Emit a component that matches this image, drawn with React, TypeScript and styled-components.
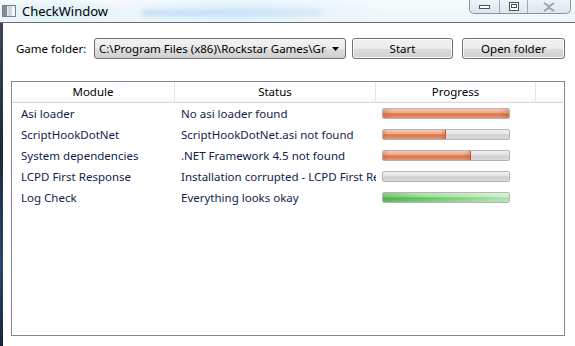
import React from 'react';
import styled, { createGlobalStyle } from 'styled-components';

const Global = createGlobalStyle`
	html, body {
		margin: 0;
		padding: 0;
		background: #ffffff;
	}
	body {
		font-family: 'Noto Sans', 'DejaVu Sans', sans-serif;
		font-size: 11.5px;
		color: #000;
	}
`;

type Check = { module: string; status: string; progress: number; ok?: boolean };

const checks: Check[] = [
	{ module: 'Asi loader', status: 'No asi loader found', progress: 100 },
	{ module: 'ScriptHookDotNet', status: 'ScriptHookDotNet.asi not found', progress: 50 },
	{ module: 'System dependencies', status: '.NET Framework 4.5 not found', progress: 70 },
	{ module: 'LCPD First Response', status: 'Installation corrupted - LCPD First Response', progress: 0 },
	{ module: 'Log Check', status: 'Everything looks okay', progress: 100, ok: true },
];

const App = () => {
	return (
		<>
			<Global />
			<Window>
				<TitleBar>
					<AppIcon width='14' height='12' viewBox='0 0 14 12'>
						<rect x='0.5' y='0.5' width='13' height='11' fill='#e8eaec' stroke='#7a8088' />
						<rect x='1' y='1' width='4' height='10' fill='#7f8c9a' />
						<rect x='6' y='1' width='7' height='10' fill='#cfd6dc' />
						<rect x='10' y='1' width='3' height='10' fill='#f4f6f8' />
					</AppIcon>
					<Title>CheckWindow</Title>
					<BlurredUrl />
					<CaptionButtons>
						<CaptionButton $width={29}>
							<svg width='11' height='6' viewBox='0 0 11 6'>
								<rect x='0.5' y='1.5' width='10' height='3' fill='#fff' stroke='#4a4f58' />
							</svg>
						</CaptionButton>
						<CaptionButton $width={27}>
							<svg width='10' height='9' viewBox='0 0 10 9'>
								<rect x='0.5' y='0.5' width='9' height='8' fill='#fff' stroke='#4a4f58' />
								<rect x='2.5' y='2.5' width='5' height='3' fill='none' stroke='#4a4f58' />
							</svg>
						</CaptionButton>
						<CaptionButton $width={42} $last>
							<svg width='12' height='10' viewBox='0 0 12 10'>
								<path d='M1 0.8 L6 4.5 L11 0.8 M1 9.2 L6 5.5 L11 9.2' fill='none' stroke='#6b717a' strokeWidth='1.6' />
								<path d='M1 0.8 L6 4.5 L11 0.8 M1 9.2 L6 5.5 L11 9.2' fill='none' stroke='#fff' strokeWidth='0.6' />
							</svg>
						</CaptionButton>
					</CaptionButtons>
				</TitleBar>
				<Body>
					<Frame />
					<Client>
						<Toolbar>
							<Label>Game folder:</Label>
							<ComboBox>
								<ComboText>C:\Program Files (x86)\Rockstar Games\Grand Theft Auto IV</ComboText>
								<ComboArrow>
									<svg width='7' height='4' viewBox='0 0 7 4'>
										<path d='M0 0 L7 0 L3.5 4 Z' fill='#000' />
									</svg>
								</ComboArrow>
							</ComboBox>
							<Button $width={101}>Start</Button>
							<Button $width={103} $gap={9}>
								Open folder
							</Button>
						</Toolbar>
						<ListView>
							<HeaderRow>
								<HeaderCell>Module</HeaderCell>
								<HeaderCell>Status</HeaderCell>
								<HeaderCell>Progress</HeaderCell>
								<HeaderCell />
							</HeaderRow>
							{checks.map((c) => (
								<Row key={c.module}>
									<ModuleCell>{c.module}</ModuleCell>
									<StatusCell>{c.status}</StatusCell>
									<ProgressCell>
										<Track>
											<Fill
												$ok={c.ok}
												$edge={c.progress > 0 && c.progress < 100}
												style={{ width: `${c.progress}%` }}
											/>
										</Track>
									</ProgressCell>
								</Row>
							))}
						</ListView>
					</Client>
				</Body>
			</Window>
		</>
	);
};

const Window = styled.div`
	width: 575px;
	height: 346px;
	display: flex;
	flex-direction: column;
	overflow: hidden;
`;

const TitleBar = styled.div`
	height: 22px;
	display: flex;
	align-items: flex-start;
	border-bottom: 1px solid #6c6f74;
	background:
		radial-gradient(ellipse 70px 14px at 60px 12px, rgba(190, 225, 245, 0.5), transparent),
		radial-gradient(ellipse 140px 16px at 240px 10px, rgba(205, 235, 250, 0.6), transparent),
		linear-gradient(to bottom, #f6fafd, #edf5fa);
`;

const AppIcon = styled.svg`
	margin: 5px 0 0 2px;
	flex: none;
`;

const Title = styled.div`
	margin: 3px 0 0 6px;
	font-size: 13px;
	color: #000;
	line-height: 16px;
`;

const BlurredUrl = styled.div`
	margin: 10px 0 0 34px;
	width: 180px;
	height: 6px;
	border-radius: 4px;
	background: linear-gradient(to right, rgba(140, 185, 240, 0.4), rgba(170, 205, 245, 0.3));
	filter: blur(2.5px);
`;

const CaptionButtons = styled.div`
	margin-left: auto;
	margin-right: 4px;
	display: flex;
	height: 13px;
	border: 1px solid #8c939c;
	border-top: none;
	border-radius: 0 0 5px 5px;
	background: linear-gradient(to bottom, #eef3f7, #dde5ec);
	overflow: hidden;
`;

const CaptionButton = styled.div<{ $width: number; $last?: boolean }>`
	width: ${(p) => p.$width}px;
	display: flex;
	align-items: center;
	justify-content: center;
	border-right: ${(p) => (p.$last ? 'none' : '1px solid #a3aab3')};
	svg {
		display: block;
	}
`;

const Body = styled.div`
	flex: 1;
	display: flex;
	min-height: 0;
`;

const Frame = styled.div`
	width: 3px;
	flex: none;
	background: linear-gradient(to bottom, #3b4656, #1c2a3c 40%, #27486a 75%, #16263a);
`;

const Client = styled.div`
	flex: 1;
	background: #ffffff;
	display: flex;
	flex-direction: column;
	padding: 15px 10px 10px 13px;
`;

const Toolbar = styled.div`
	display: flex;
	align-items: center;
	height: 21px;
`;

const Label = styled.div`
	width: 78px;
	flex: none;
	line-height: 16px;
	margin-top: 1px;
`;

const ComboBox = styled.div`
	width: 252px;
	height: 21px;
	box-sizing: border-box;
	flex: none;
	display: flex;
	align-items: center;
	border: 1px solid #707070;
	border-radius: 3px;
	background: linear-gradient(to bottom, #f2f2f2 0%, #ebebeb 50%, #dddddd 51%, #cfcfcf 100%);
	overflow: hidden;
`;

const ComboText = styled.div`
	flex: 1;
	min-width: 0;
	overflow: hidden;
	white-space: nowrap;
	padding-left: 4px;
	line-height: 16px;
`;

const ComboArrow = styled.div`
	width: 18px;
	flex: none;
	display: flex;
	justify-content: center;
	padding-right: 1px;
	svg {
		display: block;
	}
`;

const Button = styled.div<{ $width: number; $gap?: number }>`
	width: ${(p) => p.$width}px;
	height: 21px;
	box-sizing: border-box;
	flex: none;
	margin-left: ${(p) => p.$gap ?? 6}px;
	display: flex;
	align-items: center;
	justify-content: center;
	border: 1px solid #707070;
	border-radius: 3px;
	box-shadow: inset 0 0 0 1px rgba(255, 255, 255, 0.8);
	background: linear-gradient(to bottom, #f2f2f2 0%, #ebebeb 50%, #dddddd 51%, #cfcfcf 100%);
	line-height: 16px;
`;

const ListView = styled.div`
	margin: 22px 0 0 -5px;
	flex: 1;
	border: 1px solid #828790;
	display: flex;
	flex-direction: column;
	background: #fff;
`;

const columns = '163px 201px 160px 1fr';

const HeaderRow = styled.div`
	display: grid;
	grid-template-columns: ${columns};
	height: 20px;
	border-bottom: 1px solid #d5d5d5;
	background: linear-gradient(to bottom, #ffffff, #ffffff 60%, #f7f8f9);
	margin-right: 1px;
`;

const HeaderCell = styled.div`
	display: flex;
	align-items: center;
	justify-content: center;
	border-right: 1px solid #e3e4e6;
	line-height: 16px;
	&:last-child {
		border-right: none;
	}
`;

const Row = styled.div`
	display: grid;
	grid-template-columns: ${columns};
	height: 21px;
	align-items: center;
	color: #101c4a;
	line-height: 16px;
`;

const ModuleCell = styled.div`
	padding-left: 9px;
	white-space: nowrap;
	overflow: hidden;
`;

const StatusCell = styled.div`
	padding-left: 6px;
	white-space: nowrap;
	overflow: hidden;
`;

const ProgressCell = styled.div`
	padding-left: 6px;
	display: flex;
	align-items: center;
`;

const Track = styled.div`
	width: 128px;
	height: 11px;
	box-sizing: border-box;
	border: 1px solid #b4b4b4;
	border-radius: 2px;
	background: linear-gradient(to bottom, #f0f0f0 0%, #e2e2e2 45%, #cfcfcf 55%, #dadada 100%);
	overflow: hidden;
	display: flex;
`;

const Fill = styled.div<{ $ok?: boolean; $edge?: boolean }>`
	height: 100%;
	background: ${(p) =>
		p.$ok
			? 'linear-gradient(to right, rgba(40,150,40,0.35), transparent 30%, rgba(255,255,255,0.5)), linear-gradient(to bottom, #b9e6b5 0%, #9edb99 40%, #5fc05b 55%, #7fcf7a 100%)'
			: 'linear-gradient(to right, rgba(190,80,40,0.3), transparent 8%, transparent 92%, rgba(190,80,40,0.3)), linear-gradient(to bottom, #f6cbb5 0%, #eea887 40%, #d9744a 55%, #e69473 100%)'};
	border-right: ${(p) => (p.$edge ? '1px solid #d9531e' : 'none')};
	box-sizing: border-box;
`;

export default App;
